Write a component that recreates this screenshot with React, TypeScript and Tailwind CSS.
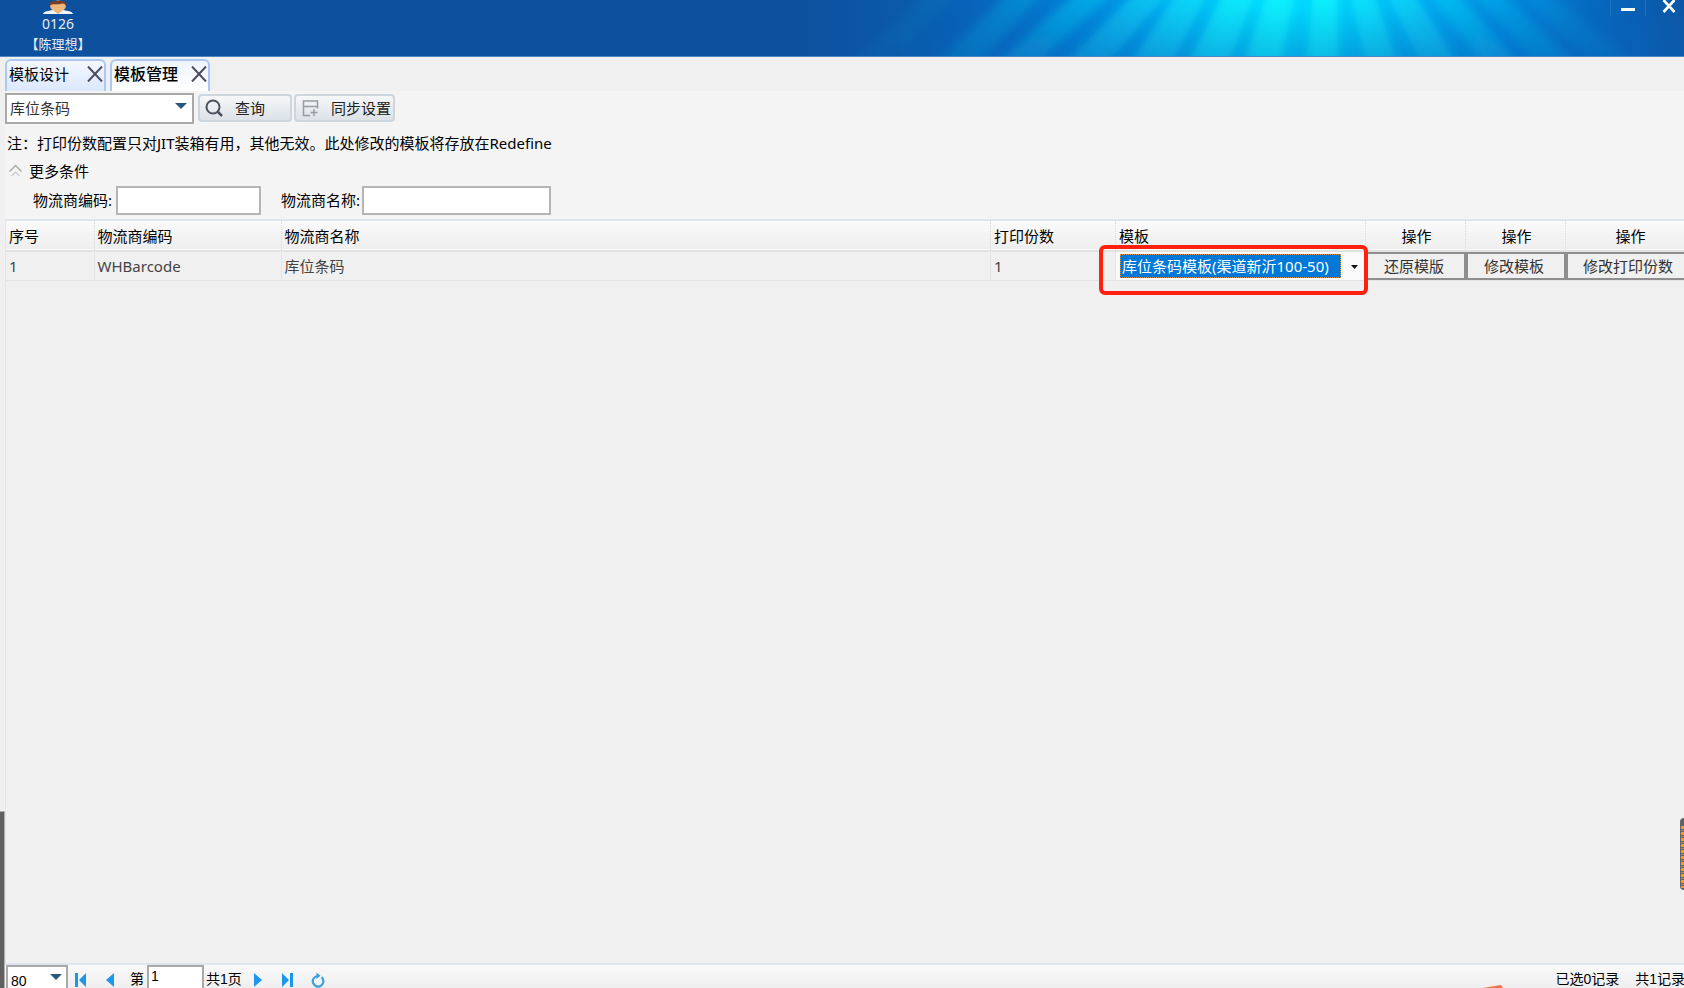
import React, { useState } from 'react';

interface Ray {
  top: number;
  bottom: number;
  half: number;
  opacity: number;
}

// x positions are relative to the left edge of the glow drawing (884px wide)
const rays: Ray[] = [
  { top: 135, bottom: 78, half: 16, opacity: 0.06 },
  { top: 219, bottom: 164, half: 17, opacity: 0.2 },
  { top: 286, bottom: 224, half: 17, opacity: 0.3 },
  { top: 345, bottom: 292, half: 17, opacity: 0.38 },
  { top: 388, bottom: 355, half: 16, opacity: 0.48 },
  { top: 436, bottom: 411, half: 16, opacity: 0.65 },
  { top: 479, bottom: 464, half: 14, opacity: 0.75 },
  { top: 525, bottom: 523, half: 12, opacity: 0.75 },
  { top: 564, bottom: 580, half: 12, opacity: 0.5 },
  { top: 604, bottom: 636, half: 14, opacity: 0.4 },
  { top: 649, bottom: 695, half: 14, opacity: 0.3 },
  { top: 695, bottom: 750, half: 15, opacity: 0.2 },
  { top: 742, bottom: 808, half: 16, opacity: 0.1 },
];

const columns = [
  { label: '序号', width: 'w-[88px]', center: false },
  { label: '物流商编码', width: 'w-[187px]', center: false },
  { label: '物流商名称', width: '', center: false },
  { label: '打印份数', width: 'w-[125px]', center: false },
  { label: '模板', width: 'w-[250px]', center: false },
  { label: '操作', width: 'w-[100px]', center: true },
  { label: '操作', width: 'w-[100px]', center: true },
  { label: '操作', width: 'w-[128px]', center: true },
];

const HeaderGlow: React.FC = () => (
  <svg className="absolute top-0 right-0 h-[57px] w-[884px]" viewBox="0 0 884 57" preserveAspectRatio="none" aria-hidden="true">
    <defs>
      <linearGradient id="glow" x1="0" x2="1" y1="0" y2="0">
        <stop offset="0" stopColor="#0d519e" />
        <stop offset="0.13" stopColor="#0a5aab" />
        <stop offset="0.24" stopColor="#056bc4" />
        <stop offset="0.33" stopColor="#0088dc" />
        <stop offset="0.41" stopColor="#00a8ee" />
        <stop offset="0.48" stopColor="#00c6f8" />
        <stop offset="0.54" stopColor="#00dcfe" />
        <stop offset="0.62" stopColor="#00cdfa" />
        <stop offset="0.71" stopColor="#00a8ee" />
        <stop offset="0.8" stopColor="#0085dc" />
        <stop offset="0.9" stopColor="#0668bf" />
        <stop offset="1" stopColor="#0d56a6" />
      </linearGradient>
      <linearGradient id="ray" x1="0" x2="0" y1="0" y2="1">
        <stop offset="0" stopColor="#10ffff" />
        <stop offset="1" stopColor="#20d0ea" stopOpacity="0.55" />
      </linearGradient>
      <linearGradient id="shade" x1="0" x2="0" y1="0" y2="1">
        <stop offset="0.1" stopColor="#0860b4" stopOpacity="0" />
        <stop offset="1" stopColor="#0860b4" stopOpacity="0.4" />
      </linearGradient>
      <filter id="soft" x="-20%" y="-20%" width="140%" height="140%">
        <feGaussianBlur stdDeviation="4" />
      </filter>
    </defs>
    <rect width="884" height="57" fill="url(#glow)" />
    <rect x="100" width="784" height="57" fill="url(#shade)" />
    <g filter="url(#soft)">
      {rays.map((r) => {
        // extended a little above and below so that the blur has no edge
        const dx = (r.bottom - r.top) * 0.2;
        const a = r.top - dx;
        const b = r.bottom + dx;
        return (
          <polygon
            key={r.top}
            fill="url(#ray)"
            opacity={r.opacity}
            points={`${a - r.half},-11 ${a + r.half},-11 ${b + r.half + 4},68 ${b - r.half - 4},68`}
          />
        );
      })}
    </g>
  </svg>
);

const Avatar: React.FC = () => (
  <svg className="h-[14px] w-[30px]" viewBox="0 0 30 14" aria-hidden="true">
    <path d="M0 14c1-3 5-3 10-4h10c5 1 9 1 10 4z" fill="#eef3f8" />
    <path d="M11 9h8v2l-4 3-4-3z" fill="#e8b07a" />
    <ellipse cx="15" cy="6" rx="8" ry="5.500" fill="#efb77c" />
    <path d="M7 6C5 1 10 1 15 1s10 0 8 5c-1-3-4-3-6-2-3 1-8-1-10 2z" fill="#7a3d22" />
  </svg>
);

const CrossIcon: React.FC = () => (
  <svg className="h-4 w-4" viewBox="0 0 16 16" fill="none" stroke="#4b4b5c" strokeWidth="2" aria-hidden="true">
    <path d="M1 0.5l14 15M15 0.5L1 15.5" />
  </svg>
);

const Caret: React.FC<{ className: string }> = ({ className }) => (
  <svg className={`pointer-events-none absolute h-[6px] w-[12px] ${className}`} viewBox="0 0 12 6" aria-hidden="true">
    <path d="M0 0h12L6 6z" fill="#2a587a" />
  </svg>
);

const App: React.FC = () => {
  const [code, setCode] = useState('');
  const [name, setName] = useState('');
  const [page, setPage] = useState('1');

  const toolButton =
    'flex h-7 items-center rounded-[4px] border-2 border-[#cdd6dc] bg-linear-to-b from-[#f6f7f8] to-[#dce2e7] text-[#222]';
  const rowButton = 'block h-7 w-full border-2 border-[#8e8e8e] bg-[#f0f0f0] pr-[3px] text-center leading-6 text-[#333]';

  return (
    <div className="relative flex h-screen flex-col overflow-hidden bg-[#f0f0f0] font-['Noto_Sans','Noto_Sans_CJK_SC',sans-serif] text-[15px] leading-5 text-black">
      <header className="relative h-[57px] shrink-0 overflow-hidden border-b border-[#4b86c4] bg-[#0d519e]">
        <HeaderGlow />
        <div className="flex w-29 flex-col items-center text-[#e6edf5]">
          <Avatar />
          <span className="text-sm leading-5">0126</span>
          <span className="text-[13px] leading-5">【陈理想】</span>
        </div>
        <div className="absolute top-0 right-0 flex h-4">
          <button aria-label="最小化" className="flex w-9 items-center justify-center border-x border-[#1a76bf]">
            <svg className="h-4 w-4" viewBox="0 0 16 16" aria-hidden="true">
              <path d="M1 8h14v3H1z" fill="#fff" />
            </svg>
          </button>
          <button aria-label="关闭" className="flex w-[38px] items-center justify-end pr-2">
            <svg className="h-4 w-[14px]" viewBox="0 0 14 16" fill="none" stroke="#fff" strokeWidth="2.600" aria-hidden="true">
              <path d="M1.500 0l11 12M12.500 0l-11 12" />
            </svg>
          </button>
        </div>
      </header>

      <nav className="flex h-[34px] shrink-0 items-end gap-1 pl-[5px]">
        <div className="flex h-8 w-[101px] items-center justify-between rounded-t-md border-2 border-b-0 border-[#a9c8f5] bg-linear-to-b from-[#f3f7ff] to-[#dbe8ff] pr-px pb-1 pl-[2px]">
          <button>模板设计</button>
          <button aria-label="关闭模板设计"><CrossIcon /></button>
        </div>
        <div className="flex h-8 w-[100px] items-center justify-between rounded-t-md border-2 border-b-0 border-[#a9c8f5] bg-linear-to-b from-[#eef4ff] to-white pr-px pb-1 pl-[2px]">
          <button className="text-base leading-5 font-medium">模板管理</button>
          <button aria-label="关闭模板管理"><CrossIcon /></button>
        </div>
      </nav>

      <main className="ml-[5px] flex min-h-0 flex-1 flex-col bg-[#f4f4f4]">
        <div className="flex h-[34px] shrink-0 items-center">
          <div className="relative">
            <select aria-label="模板类型" className="h-[31px] w-[189px] appearance-none border-2 border-[#a9a9a9] bg-white pl-[3px] text-[#333]">
              <option>库位条码</option>
            </select>
            <Caret className="top-[10px] right-[7px]" />
          </div>
          <button className={`${toolButton} ml-1 w-[94px] gap-3 pl-[5px]`}>
            <svg className="h-[18px] w-[18px]" viewBox="0 0 18 18" fill="none" stroke="#4a5260" strokeWidth="2" aria-hidden="true">
              <circle cx="8" cy="8" r="6.500" />
              <path d="M12.500 12.500l4.500 4.500" strokeWidth="2.500" />
            </svg>
            查询
          </button>
          <button className={`${toolButton} ml-[2px] w-[101px] gap-3 pl-[6px] whitespace-nowrap`}>
            <svg className="h-[17px] w-[17px] shrink-0" viewBox="0 0 17 17" fill="none" stroke="#969ca3" strokeWidth="1.500" aria-hidden="true">
              <path d="M1.500 1h14v5.500h-14zM1.500 6.500v9H8M15.500 6.500v2M12 9v7M8.500 12.500h7" />
            </svg>
            同步设置
          </button>
        </div>

        <p className="mt-2 pl-[2px]">注：打印份数配置只对JIT装箱有用，其他无效。此处修改的模板将存放在Redefine</p>

        <button className="mt-2 flex items-center gap-[7px] self-start pl-1">
          <svg className="h-[14px] w-[13px]" viewBox="0 0 13 14" fill="none" strokeWidth="1.500" aria-hidden="true">
            <path d="M0.500 7.500l6-6 6 6" stroke="#ababab" />
            <path d="M2.500 12l4-4 4 4" stroke="#cfcfcf" />
          </svg>
          更多条件
        </button>

        <div className="mt-1 flex h-[30px] shrink-0 items-center pl-7">
          <label htmlFor="code" className="w-[83px]">物流商编码:</label>
          <input id="code" value={code} onChange={(e) => setCode(e.target.value)} className="h-[29px] w-[145px] border-2 border-[#b5b5b5] bg-white px-1" />
          <label htmlFor="name" className="ml-5 w-[81px]">物流商名称:</label>
          <input id="name" value={name} onChange={(e) => setName(e.target.value)} className="h-[29px] w-[189px] border-2 border-[#b5b5b5] bg-white px-1" />
        </div>

        <div className="mt-1 min-h-0 flex-1 overflow-hidden border-t-2 border-l border-[#e2e5ea] bg-[#f0f0f0]">
          <table className="w-[calc(100%+10px)] table-fixed border-collapse">
            <thead>
              <tr className="h-[30px] border-b-2 border-[#e2e2e2] bg-linear-to-b from-[#fafafa] to-[#eeeeee]">
                {columns.map((col, idx) => (
                  <th
                    key={idx}
                    className={`border-r border-dotted border-r-[#d8d8d8] p-0 font-normal ${col.width} ${
                      col.center ? 'pl-[2px] text-center' : 'pl-[3px] text-left'
                    }`}
                  >
                    {col.label}
                  </th>
                ))}
              </tr>
            </thead>
            <tbody>
              <tr className="h-[29px] border-b border-[#e4e4e4] text-[#444]">
                <td className="border-r border-[#e4e4e4] py-0 pl-[3px]">1</td>
                <td className="border-r border-[#e4e4e4] py-0 pl-[3px]">WHBarcode</td>
                <td className="border-r border-[#e4e4e4] py-0 pl-[3px]">库位条码</td>
                <td className="border-r border-[#e4e4e4] py-0 pl-[3px]">1</td>
                <td className="relative bg-[#fafafa] py-0 pl-1">
                  <select aria-label="模板" className="block h-6 w-[221px] appearance-none border border-dotted border-[#e08a3c] bg-[#0078d7] pl-px text-white">
                    <option>库位条码模板(渠道新沂100-50)</option>
                  </select>
                  <svg className="pointer-events-none absolute top-[13px] right-2 h-1 w-[7px]" viewBox="0 0 7 4" aria-hidden="true">
                    <path d="M0 0h7L3.500 4z" fill="#111" />
                  </svg>
                  {/* highlight frame around the template picker */}
                  <div className="pointer-events-none absolute -top-[7px] -right-[2px] -left-[17px] h-[50px] rounded-md border-4 border-[#ff2010]" />
                </td>
                <td className="p-0"><button className={rowButton}>还原模版</button></td>
                <td className="p-0"><button className={rowButton}>修改模板</button></td>
                <td className="p-0"><button className={rowButton}>修改打印份数</button></td>
              </tr>
            </tbody>
          </table>
        </div>
      </main>

      <footer className="ml-[5px] flex h-[25px] shrink-0 items-start border-t-2 border-[#e0e4ec] bg-linear-to-b from-[#f9f9f9] to-[#efefef] pl-px font-['Liberation_Sans','Noto_Sans_CJK_SC',sans-serif] text-sm leading-7 whitespace-nowrap">
        <div className="relative">
          <select aria-label="每页条数" className="block h-[30px] w-[62px] appearance-none border-2 border-[#a9a9a9] bg-white pl-[3px]">
            <option>80</option>
          </select>
          <Caret className="top-[9px] right-[6px]" />
        </div>
        <button aria-label="首页" className="ml-[7px] flex h-[30px] items-center">
          <svg className="h-[14px] w-[11px]" viewBox="0 0 11 14" fill="#1c97ea" aria-hidden="true">
            <path d="M0 0h3v14H0zM11 0v14L4 7z" />
          </svg>
        </button>
        <button aria-label="上一页" className="ml-5 flex h-[30px] items-center">
          <svg className="h-[14px] w-2" viewBox="0 0 8 14" fill="#1c97ea" aria-hidden="true">
            <path d="M8 0v14L0 7z" />
          </svg>
        </button>
        <label htmlFor="page" className="ml-4 w-[17px]">第</label>
        <input id="page" value={page} onChange={(e) => setPage(e.target.value)} className="h-[30px] w-[57px] border-2 border-[#a9a9a9] bg-white px-[2px] pb-2 leading-5" />
        <span className="ml-[2px] w-[36px]">共1页</span>
        <button aria-label="下一页" className="ml-3 flex h-[30px] items-center">
          <svg className="h-[14px] w-2" viewBox="0 0 8 14" fill="#1c97ea" aria-hidden="true">
            <path d="M0 0v14l8-7z" />
          </svg>
        </button>
        <button aria-label="末页" className="ml-5 flex h-[30px] items-center">
          <svg className="h-[14px] w-[11px]" viewBox="0 0 11 14" fill="#1c97ea" aria-hidden="true">
            <path d="M8 0h3v14H8zM0 0v14l7-7z" />
          </svg>
        </button>
        <button aria-label="刷新" className="ml-[18px] flex h-[30px] items-center">
          <svg className="h-4 w-[14px]" viewBox="0 0 14 16" fill="none" stroke="#3a9fe0" strokeWidth="2.200" aria-hidden="true">
            <path d="M10.500 5.200A5.300 5.300 0 1 1 6.500 4" />
            <path d="M5.500 0.500v6.500L9.500 3.800z" fill="#3a9fe0" stroke="none" />
          </svg>
        </button>
        <div className="-mr-px ml-auto flex gap-4">
          <span>已选0记录</span>
          <span>共1记录</span>
        </div>
      </footer>

      {/* edges of floating windows */}
      <div className="absolute bottom-0 left-0 h-[177px] w-[5px] border-t border-r border-[#b0b0b0] bg-[#60605f]" />
      <div className="absolute right-0 bottom-[98px] h-[72px] w-1 overflow-hidden rounded-l-sm border-t-8 border-b-2 border-l border-[#606468] bg-[#606468]">
        <div className="h-full bg-[repeating-linear-gradient(to_bottom,#ff9a16_0_3px,#606468_3px_4px,#b08a60_4px_5px,#606468_5px_6px)]" />
      </div>
      <svg className="absolute right-[181px] bottom-0 h-[3px] w-5" viewBox="0 0 20 3" aria-hidden="true">
        <path d="M0 3L18 0l2 3z" fill="#f0714a" />
      </svg>
    </div>
  );
};

export default App;
